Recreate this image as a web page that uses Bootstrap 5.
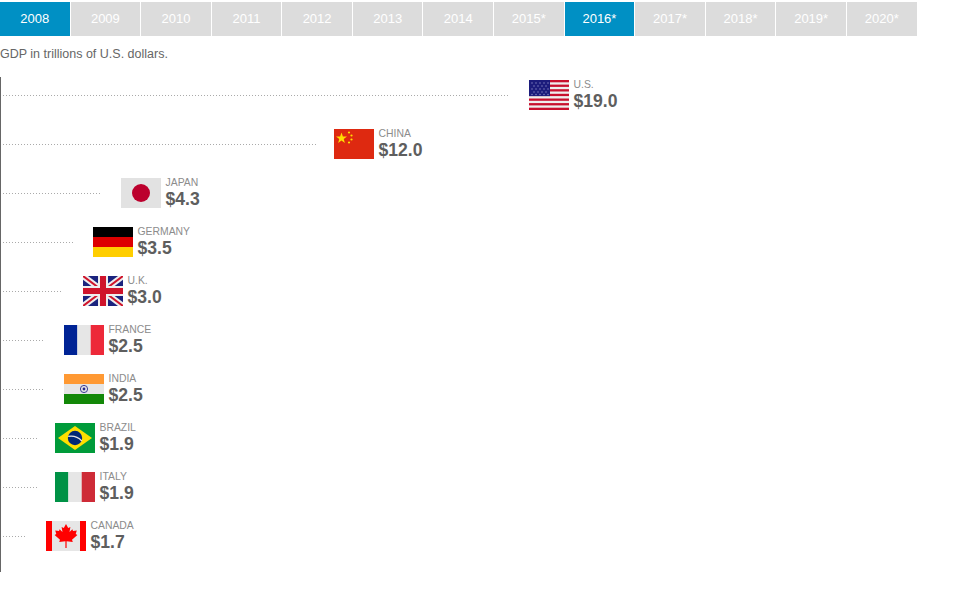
<!DOCTYPE html>
<html lang="en">
<head>
<meta charset="utf-8">
<title>GDP in trillions of U.S. dollars</title>
<link href="https://cdn.jsdelivr.net/npm/bootstrap@5.3.0/dist/css/bootstrap.min.css" rel="stylesheet">
<style>
body{font-family:"Liberation Sans",Arial,sans-serif;background:#fff;color:#666}
.year-bar{width:916.5px;gap:1px;padding-top:2px}
.year-tab{flex:1 1 0;height:34px;background:#dcdcdc;color:#fff;font-size:13px;line-height:34px;text-align:center;text-decoration:none}
.year-tab.on{background:#0090c4}
.sub-note{font-size:12.5px;line-height:14px;margin:11px 0 0;color:#666}
.gdp-chart{margin-top:16px;border-left:1px solid #666;padding:3px 0 21px 2px;width:960px}
.gdp-row{height:30px;margin-bottom:19px}
.gdp-row:last-child{margin-bottom:0}
.leader{height:1px;margin-top:1px;flex:none;background:repeating-linear-gradient(90deg,#aaa 0 1px,transparent 1px 3px)}
.flag-box{width:40px;height:30px;display:block;flex:none}
.gdp-text{margin-left:4.5px;line-height:1}
.gdp-name{font-size:10.4px;line-height:11px;color:#8c8c8c}
.gdp-val{font-size:17.6px;font-weight:700;line-height:22px;color:#5e5e5e}
</style>
</head>
<body>
<nav class="d-flex year-bar">
<a class="year-tab on" href="#">2008</a><a class="year-tab" href="#">2009</a><a class="year-tab" href="#">2010</a><a class="year-tab" href="#">2011</a><a class="year-tab" href="#">2012</a><a class="year-tab" href="#">2013</a><a class="year-tab" href="#">2014</a><a class="year-tab" href="#">2015*</a><a class="year-tab on" href="#">2016*</a><a class="year-tab" href="#">2017*</a><a class="year-tab" href="#">2018*</a><a class="year-tab" href="#">2019*</a><a class="year-tab" href="#">2020*</a>
</nav>
<p class="sub-note">GDP in trillions of U.S. dollars.</p>
<div class="gdp-chart">

<div class="d-flex align-items-center gdp-row">
<span class="leader" style="width:505px;margin-right:21px"></span>
<svg class="flag-box" viewBox="0 0 40 30"><rect width="40" height="30" fill="#eee"/><g fill="#c8102e"><rect y="0" width="40" height="2.3"/><rect y="4.6" width="40" height="2.3"/><rect y="9.2" width="40" height="2.3"/><rect y="13.8" width="40" height="2.3"/><rect y="18.5" width="40" height="2.3"/><rect y="23.1" width="40" height="2.3"/><rect y="27.7" width="40" height="2.3"/></g><rect width="21" height="16.1" fill="#1c1c7c"/><g fill="#8f8fc8"><circle cx="3" cy="3" r=".7"/><circle cx="7" cy="3" r=".7"/><circle cx="11" cy="3" r=".7"/><circle cx="15" cy="3" r=".7"/><circle cx="19" cy="3" r=".7"/><circle cx="5" cy="6" r=".7"/><circle cx="9" cy="6" r=".7"/><circle cx="13" cy="6" r=".7"/><circle cx="17" cy="6" r=".7"/><circle cx="3" cy="9" r=".7"/><circle cx="7" cy="9" r=".7"/><circle cx="11" cy="9" r=".7"/><circle cx="15" cy="9" r=".7"/><circle cx="19" cy="9" r=".7"/><circle cx="5" cy="12" r=".7"/><circle cx="9" cy="12" r=".7"/><circle cx="13" cy="12" r=".7"/><circle cx="17" cy="12" r=".7"/><circle cx="3" cy="14.5" r=".7"/><circle cx="7" cy="14.5" r=".7"/><circle cx="11" cy="14.5" r=".7"/><circle cx="15" cy="14.5" r=".7"/><circle cx="19" cy="14.5" r=".7"/></g></svg>
<div class="gdp-text"><div class="gdp-name">U.S.</div><div class="gdp-val">$19.0</div></div>
</div>

<div class="d-flex align-items-center gdp-row">
<span class="leader" style="width:313px;margin-right:18px"></span>
<svg class="flag-box" viewBox="0 0 40 30"><rect width="40" height="30" fill="#de2910"/><g fill="#ffde00"><polygon points="7.5,3.5 8.9,7.4 13,7.5 9.7,10 10.9,14 7.5,11.6 4.1,14 5.3,10 2,7.5 6.1,7.4"/><circle cx="15" cy="3.5" r="1.1"/><circle cx="17.5" cy="6.5" r="1.1"/><circle cx="17.5" cy="10.5" r="1.1"/><circle cx="15" cy="13.5" r="1.1"/></g></svg>
<div class="gdp-text"><div class="gdp-name">CHINA</div><div class="gdp-val">$12.0</div></div>
</div>

<div class="d-flex align-items-center gdp-row">
<span class="leader" style="width:98px;margin-right:20px"></span>
<svg class="flag-box" viewBox="0 0 40 30"><rect width="40" height="30" fill="#e2e2e2"/><circle cx="20" cy="15" r="9" fill="#bc002d"/></svg>
<div class="gdp-text"><div class="gdp-name">JAPAN</div><div class="gdp-val">$4.3</div></div>
</div>

<div class="d-flex align-items-center gdp-row">
<span class="leader" style="width:70px;margin-right:20px"></span>
<svg class="flag-box" viewBox="0 0 40 30"><rect width="40" height="10" fill="#000"/><rect y="10" width="40" height="10" fill="#dd0000"/><rect y="20" width="40" height="10" fill="#ffce00"/></svg>
<div class="gdp-text"><div class="gdp-name">GERMANY</div><div class="gdp-val">$3.5</div></div>
</div>

<div class="d-flex align-items-center gdp-row">
<span class="leader" style="width:59px;margin-right:21px"></span>
<svg class="flag-box" viewBox="0 0 40 30"><rect width="40" height="30" fill="#1a237e"/><path d="M0 0L40 30M40 0L0 30" stroke="#eee" stroke-width="6"/><path d="M0 0L40 30M40 0L0 30" stroke="#cf142b" stroke-width="2"/><path d="M20 0V30M0 15H40" stroke="#eee" stroke-width="10"/><path d="M20 0V30M0 15H40" stroke="#cf142b" stroke-width="6"/></svg>
<div class="gdp-text"><div class="gdp-name">U.K.</div><div class="gdp-val">$3.0</div></div>
</div>

<div class="d-flex align-items-center gdp-row">
<span class="leader" style="width:41px;margin-right:20px"></span>
<svg class="flag-box" viewBox="0 0 40 30"><rect width="13.4" height="30" fill="#002395"/><rect x="13.4" width="13.3" height="30" fill="#e6e6e6"/><rect x="26.7" width="13.3" height="30" fill="#ed2939"/></svg>
<div class="gdp-text"><div class="gdp-name">FRANCE</div><div class="gdp-val">$2.5</div></div>
</div>

<div class="d-flex align-items-center gdp-row">
<span class="leader" style="width:41px;margin-right:20px"></span>
<svg class="flag-box" viewBox="0 0 40 30"><rect width="40" height="10" fill="#ff9933"/><rect y="10" width="40" height="10" fill="#e6e6e6"/><rect y="20" width="40" height="10" fill="#138808"/><circle cx="20" cy="15" r="3.6" fill="none" stroke="#2a2a8c" stroke-width=".9"/><circle cx="20" cy="15" r="1.4" fill="#2a2a8c"/></svg>
<div class="gdp-text"><div class="gdp-name">INDIA</div><div class="gdp-val">$2.5</div></div>
</div>

<div class="d-flex align-items-center gdp-row">
<span class="leader" style="width:34px;margin-right:18px"></span>
<svg class="flag-box" viewBox="0 0 40 30"><rect width="40" height="30" fill="#009b3a"/><polygon points="20,3 37,15 20,27 3,15" fill="#fedf00"/><circle cx="20" cy="15" r="7.2" fill="#002776"/><path d="M13.2 13.4C18 12.6 23.5 14.4 26.8 18" stroke="#e6e6e6" stroke-width="1.3" fill="none"/></svg>
<div class="gdp-text"><div class="gdp-name">BRAZIL</div><div class="gdp-val">$1.9</div></div>
</div>

<div class="d-flex align-items-center gdp-row">
<span class="leader" style="width:34px;margin-right:18px"></span>
<svg class="flag-box" viewBox="0 0 40 30"><rect width="13.4" height="30" fill="#009246"/><rect x="13.4" width="13.3" height="30" fill="#e6e6e6"/><rect x="26.7" width="13.3" height="30" fill="#ce2b37"/></svg>
<div class="gdp-text"><div class="gdp-name">ITALY</div><div class="gdp-val">$1.9</div></div>
</div>

<div class="d-flex align-items-center gdp-row">
<span class="leader" style="width:24px;margin-right:19px"></span>
<svg class="flag-box" viewBox="0 0 40 30"><rect width="40" height="30" fill="#e6e6e6"/><rect width="6" height="30" fill="#f00"/><rect x="34" width="6" height="30" fill="#f00"/><path d="M20 3L22.2 7L24.4 5.9L23.5 11L26.4 8.2L27 10L30.8 9.4L29.7 13L31.4 14L26 18.8L26.8 21L20.6 20.2V27H19.4V20.2L13.2 21L14 18.8L8.6 14L10.3 13L9.2 9.4L13 10L13.6 8.2L16.5 11L15.6 5.9L17.8 7Z" fill="#f00"/></svg>
<div class="gdp-text"><div class="gdp-name">CANADA</div><div class="gdp-val">$1.7</div></div>
</div>

</div>
<script src="https://cdn.jsdelivr.net/npm/bootstrap@5.3.0/dist/js/bootstrap.bundle.min.js"></script>
</body>
</html>
